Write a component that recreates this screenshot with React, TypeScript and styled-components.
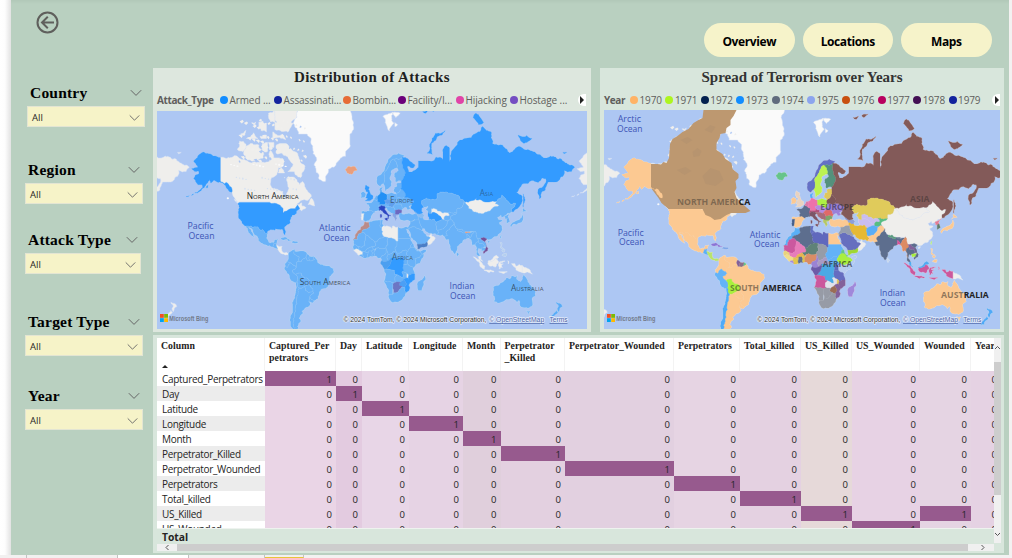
import React from "react";
import styled, { createGlobalStyle } from "styled-components";

const GlobalStyle = createGlobalStyle`
  * { box-sizing: border-box; }
  body { margin: 0; background: #fff; overflow: hidden; font-family: "Open Sans", "Noto Sans", sans-serif; }
`;

const serif = `"Liberation Serif", "DejaVu Serif", serif`;

/* ---------- geography: outlines as "lon lat" pairs ---------- */

const land: Record<string, string[]> = {
  alaska: ["-141 69.6,-146 70.1,-152 70.8,-156.5 71.3,-162 70.2,-166 68.5,-163.5 67,-162 66.2,-167.8 65.7,-165 64.5,-161 64.6,-161 63.6,-164.5 63,-166 61.6,-164 60,-162 58.7,-158 58.7,-157.5 57.5,-161 55.8,-165 54.5,-160 55.4,-156 57.3,-153.5 59.3,-151.5 61,-150 59.5,-147 60.9,-144 60,-139.5 59.7,-136 58.2,-133.5 56,-130.5 54.8,-130 56,-133 58.5,-135.5 59.8,-137.5 59,-141 60.3", "-154.5 57.3,-152.3 58.4,-152.5 57.3", "-168 53.2,-166 54,-166.5 53.4", "-173 52.4,-170 53,-171 52.5"],
  canada: [
    "-141 69.6,-135 69.3,-128 70.2,-124 69.6,-115 68.2,-108 68,-101 68,-95 68.5,-94 71.8,-91 69.5,-86 69.5,-82 69,-82 67,-87 66,-88 64,-93 62,-94.5 59,-92.5 57,-88 56.5,-82.5 55.2,-82 52.8,-80 51.3,-79 52,-79 54.5,-77 56.5,-78 59,-77.5 62.4,-73 62.2,-69.5 61,-67 58.5,-64.5 60.2,-61.5 57,-58 54.5,-56 52.5,-59 50.3,-66 50.2,-70 47.5,-65 48.8,-65 47,-61 45.8,-65 43.6,-67 45,-69 47.4,-71 45,-75 45,-79 43.5,-82.5 42,-82.5 45.2,-84.5 46.5,-88.5 48.2,-95 49,-123 49,-127 51,-130 54.8,-130 56,-133 58.5,-135.5 59.8,-137.5 59,-141 60.3",
    "-59 47.7,-53 46.8,-53.5 49,-56 51.5",
    "-80 73.7,-72 71.5,-67 69,-62 66.5,-65 63.5,-66 62,-72 64.5,-78 64.5,-73 67.5,-79 70,-89 71,-89 73.2,-85 73.7",
    "-117 73,-105 73.3,-101 69.5,-106 68.8,-117 69.5,-119 71.5",
    "-125 72,-123 74.3,-117 73.5,-120 71.5",
    "-87 64,-81 64,-84 66", "-117 75,-106 75,-110 76.3", "-92 75,-80 74.7,-82 75.8,-92 76.5",
    "-90 77,-78 76.5,-75 78.5,-65 81.5,-65 83,-90 81.5", "-102 73.5,-97 74,-97 71.5,-102 71.7",
    "-96 74,-91 74,-91 72.7,-95 72", "-96 80,-90 80.5,-88 78.3,-94 78.5", "-105 78.5,-98 78.3,-98 76.5,-103 76.8",
    "-104 75.5,-98 75.8,-98 75,-103 75", "-122 76,-117 76.8,-118 75.8", "-112 78.3,-108 78.5,-109 77.8",
    "-128 50.8,-123.5 48.4,-125.5 49",
  ],
  greenland: ["-73 78.2,-68 80.5,-60 82,-30 83.5,-15 82,-18 79,-20 76,-20 73.5,-24 71.5,-24 70,-32 68,-40 65.5,-43 60.2,-48.5 61.2,-51.5 64.2,-53.5 67,-51 69,-54.5 70.8,-56 73.5,-60 76,-68 76"],
  svalbard: ["11 79.5,15 79.8,20 80.2,19 78.8,21 78.3,17 76.7,14 78", "20 80.1,27 80,23 79.3", "22 78.4,24.5 78,22 77.6"],
  iceland: ["-24 65.5,-22 66.4,-16 66.5,-13.6 65,-18.5 63.4,-22.5 63.9"],
  usa: ["-123 49,-95 49,-88.5 48.2,-84.5 46.5,-82.5 45.2,-82.5 42,-79 43.5,-75 45,-71 45,-69 47.4,-67 45,-70 43.5,-70 41.8,-74 40.6,-76 37,-75.7 35.3,-78.5 33.7,-81.3 31.5,-80.2 27,-80.5 25.2,-82 26.8,-83 29.8,-85 29.7,-89.5 30.2,-90 29.1,-94 29.6,-97.2 27.8,-97.2 26,-99.3 26.8,-101.5 29.7,-103.2 29,-104.7 29.9,-106.5 31.8,-111 31.4,-114.8 32.5,-117.1 32.5,-120.6 34.5,-124 39.5,-124.3 43,-124.5 48.3"],
  mexico: ["-117.1 32.5,-114.8 32.5,-111 31.4,-106.5 31.8,-104.7 29.9,-103.2 29,-101.5 29.7,-99.3 26.8,-97.2 26,-97.8 22.3,-96 19,-94.5 18.2,-91 18.7,-90.3 21,-87 21.5,-88.2 18.4,-91 17.8,-92 14.6,-95 16,-99 16.6,-104 19,-105.5 20.5,-106 23,-109.5 26,-113 31,-114.7 31.5,-112 28,-109.5 23.2,-112 24.8,-115 28"],
  guatemala: ["-92 14.6,-91 17.8,-88.2 18.4,-88.8 15.9,-87.5 13"],
  central: ["-88.8 15.9,-83.3 15,-83.6 11,-81.5 9,-79 9.5,-77.3 8.6,-78 7.5,-80.5 7.4,-83 8.3,-85.7 10,-87.5 13"],
  cuba: ["-84.8 22,-82 23.1,-77 21.5,-74.2 20.2,-77.5 19.9,-78.5 21.5"],
  hispaniola: ["-74.3 18.4,-73 19.9,-69 19.5,-68.5 18.4,-72 18"],
  colombia: ["-77.3 8.6,-75 10.8,-71.7 12.3,-72.5 9,-70 7,-67.5 6,-67 1.2,-70 0.5,-70 -4.2,-73 -2,-75.3 0,-78.8 1.4,-77.3 4"],
  venezuela: ["-71.7 12.3,-71 10.5,-68 10.7,-62 10.6,-60 8.2,-61 5,-64 3.5,-65.5 0.9,-67 1.2,-67.5 6,-70 7,-72.5 9"],
  guyana: ["-60 8.2,-57.3 6,-58 2,-60 2,-61 5"],
  suriname: ["-57.3 6,-54 5.8,-54.5 2.3,-58 2"],
  frguiana: ["-54 5.8,-51.7 4.2,-54.5 2.3"],
  brazil: ["-51.7 4.2,-50 0,-44.5 -2.5,-40 -2.9,-35.3 -5.2,-34.9 -8,-39 -13,-39 -18,-41 -22,-45 -23.5,-48.5 -26,-49 -28.7,-53.4 -33.7,-57.6 -30.2,-53.8 -27.2,-54.6 -25.6,-54.5 -24,-58 -20,-58 -17,-60 -14,-65.3 -11.5,-65.4 -9.8,-70.5 -11,-73.9 -7.3,-70 -4.2,-70 0.5,-67 1.2,-65.5 0.9,-64 3.5,-61 5,-60 2,-58 2,-54.5 2.3"],
  ecuador: ["-78.8 1.4,-75.3 0,-78.5 -4.5,-80.3 -3.4,-80.9 -1"],
  peru: ["-80.3 -3.4,-78.5 -4.5,-75.3 0,-73 -2,-70 -4.2,-73.9 -7.3,-70.5 -11,-69 -12.5,-69.5 -17.5,-70.4 -18.3,-76.2 -14,-79.5 -7.5,-81.3 -5"],
  bolivia: ["-70.5 -11,-65.4 -9.8,-65.3 -11.5,-60 -14,-58 -17,-58 -20,-62.3 -21.5,-64 -22.5,-67.5 -22.8,-69.5 -17.5,-69 -12.5"],
  paraguay: ["-58 -20,-62.3 -21.5,-58.6 -27.2,-54.6 -25.6,-54.5 -24"],
  argentina: ["-67.5 -22.8,-64 -22.5,-62.3 -21.5,-58.6 -27.2,-54.6 -25.6,-53.8 -27.2,-57.6 -30.2,-58.4 -34,-57 -36.5,-62 -39,-65 -41,-64 -42.8,-67.5 -46,-65.8 -47.8,-69 -51,-68.5 -52.4,-72 -52,-73 -49.5,-71.5 -44,-71 -38,-70 -33,-68.5 -27"],
  uruguay: ["-57.6 -30.2,-53.4 -33.7,-55 -35,-58.4 -34"],
  chile: ["-70.4 -18.3,-69.5 -17.5,-67.5 -22.8,-68.5 -27,-70 -33,-71 -38,-71.5 -44,-73 -49.5,-72 -52,-68.5 -52.4,-68 -55,-73 -53,-75.5 -48,-73.5 -42,-73.5 -37,-71.5 -31,-70.5 -24"],
  morocco: ["-6 35.8,-2.2 35.1,-1.3 32.2,-5 30,-8.7 28.7,-8.7 27.3,-12 26,-13 21.3,-17 21,-14.5 26,-10 29.5,-9.7 31.5,-6.5 34.2"],
  algeria: ["-2.2 35.1,3 36.8,8.6 36.9,8 33,9.5 30,10 26,12 23.5,5 19.2,3.2 19.1,1.2 21,-4.8 25,-8.7 27.3,-8.7 28.7,-5 30,-1.3 32.2"],
  tunisia: ["8.6 36.9,11 37,10.3 34,11.5 33.1,9.5 30,8 33"],
  libya: ["11.5 33.1,15.3 32.3,19 30.3,20 32.5,25 31.6,25 22,25 20,24 19.5,15 23,12 23.5,10 26,9.5 30"],
  egypt: ["25 31.6,31 31.5,34.2 31.3,34.9 29.5,32.5 29.9,35.8 23.9,37 22,25 22"],
  mauritania: ["-17 21,-13 21.3,-12 26,-8.7 27.3,-4.8 25,-5.8 16,-12 15,-16.3 16.5"],
  mali: ["-4.8 25,1.2 21,3.2 19.1,4 16,0.3 14.8,-4 13,-6 10.3,-8 10.5,-11.5 12.5,-12 15,-5.8 16"],
  niger: ["3.2 19.1,5 19.2,12 23.5,15 23,15.5 17,13.5 13.7,9 13,4 13.5,2.5 12,0.3 14.8,4 16"],
  chad: ["15 23,24 19.5,24 15.7,22 13,22.8 11,18.5 8.5,15.5 7.5,15 10,14 12.8,13.5 13.7,15.5 17"],
  senegal: ["-16.3 16.5,-12 15,-11.5 12.5,-16.7 12.4,-17.5 14.7"],
  guinea: ["-16.7 12.4,-11.5 12.5,-8 10.5,-8.3 7.5,-11.3 6.9,-13.3 9"],
  liberia: ["-11.3 6.9,-8.3 7.5,-7.5 4.4"],
  ivory: ["-8 10.5,-6 10.3,-2.8 9.7,-2.9 5,-7.5 4.4,-8.3 7.5"],
  burkina: ["-4 13,0.3 14.8,2.5 12,0.2 11,-2.8 11,-2.8 9.7,-6 10.3"],
  ghana: ["-2.8 11,0.2 11,1.2 6,-2.9 5,-2.8 9.7"],
  benin: ["0.2 11,2.5 12,3.6 11.5,2.7 6.3,1.2 6"],
  nigeria: ["2.7 6.3,3.6 11.5,4 13.5,9 13,13.5 13.7,14 12.8,11.5 7,8.5 4.6,6 4.3,4.5 6.3"],
  cameroon: ["8.5 4.6,11.5 7,14 12.8,15 10,15.5 7.5,14.6 5,16 2,9.8 2.2"],
  car: ["15.5 7.5,18.5 8.5,22.8 11,24 9,27.3 5,22 4.2,18.5 4.5,16 2,14.6 5"],
  sudan: ["25 22,37 22,38.5 18,36.3 14,34 10.5,32 12,28 9.5,24 9,22.8 11,22 13,24 15.7,24 19.5,25 20"],
  ssudan: ["24 9,28 9.5,32 12,34 10.5,33 8,35.8 5,31 3.7,27.3 5"],
  ethiopia: ["36.3 14,38 14.7,41 13.5,42.5 11,48 8,45 5,42 4.2,39 3.5,35.8 5,33 8,34 10.5"],
  eritrea: ["38.5 18,39.8 15.3,43 12.5,42.5 11,41 13.5,38 14.7,36.3 14"],
  somalia: ["42.5 11,51.2 11.8,48 4.5,41.5 -1.7,41 3,42 4.2,45 5,48 8"],
  kenya: ["35.8 5,39 3.5,42 4.2,41 3,41.5 -1.7,39.2 -4.7,34 -1,34 4"],
  uganda: ["31 3.7,35.8 5,34 4,34 -1,29.8 -1.3"],
  tanzania: ["34 -1,39.2 -4.7,39.5 -7,40.5 -10.5,35 -11.5,33 -9.5,30.5 -8.3,29.4 -4.5,29.8 -1.3"],
  drc: ["18.5 4.5,22 4.2,27.3 5,31 3.7,29.8 -1.3,29.4 -4.5,30.5 -8.3,28.5 -8.5,29.8 -13.4,26 -12,24 -11,22 -11.1,21.8 -7.3,16.5 -6,12.3 -6,16 -3.5,17.8 -0.5"],
  gabon: ["9.8 2.2,16 2,18.5 4.5,17.8 -0.5,16 -3.5,12.3 -6,8.8 -1"],
  angola: ["12.3 -6,16.5 -6,21.8 -7.3,22 -11.1,24 -11,22 -13,22 -16.2,23.3 -17.6,18 -17.4,11.8 -17.2,13.7 -11"],
  zambia: ["24 -11,26 -12,29.8 -13.4,28.5 -8.5,30.5 -8.3,33 -9.5,33 -14,30.3 -15.6,27 -17.9,23.3 -17.6,22 -16.2,22 -13"],
  malawi: ["33 -9.5,35 -11.5,35.5 -16.5,33 -14"],
  mozambique: ["35 -11.5,40.5 -10.5,40.5 -15.5,35 -20,35.5 -24,32.8 -26.8,31.3 -22.4,32.8 -19,30.3 -15.6,33 -14,35.5 -16.5"],
  zimbabwe: ["27 -17.9,30.3 -15.6,32.8 -19,31.3 -22.4,29 -22,26 -19.5"],
  botswana: ["23.3 -17.6,27 -17.9,26 -19.5,29 -22,25.5 -25.6,20.7 -26.8,20 -22,21 -18.3"],
  namibia: ["11.8 -17.2,18 -17.4,23.3 -17.6,21 -18.3,20 -22,20 -28.4,16.5 -28.6,14.5 -22.5"],
  safrica: ["16.5 -28.6,20 -28.4,20.7 -26.8,25.5 -25.6,29 -22,31.3 -22.4,32.8 -26.8,31 -30,28 -33,20 -34.8,18.3 -34"],
  madagascar: ["49.3 -12,50.3 -16,47.2 -25,44 -25,44.2 -17"],
  norway: ["5 61.8,5.5 59,8 58,11 59.2,12.5 61,12 63.5,14 65,18 68.5,21 69.1,25.5 69,29 69.8,31 70.3,25.5 71,18 69.7,13 66.5,9.5 63.5"],
  sweden: ["11 59.2,13 55.4,16.5 57,19 60,17.3 62,22 65.8,24 66,23.5 68,21 69.1,18 68.5,14 65,12 63.5,12.5 61"],
  finland: ["21 69.1,25.5 69,29 69.8,29.5 66,31.5 63,28 60.5,22.8 60,21.3 62.5,25.3 65,24 66,23.5 68"],
  denmark: ["8.2 57,10.6 57.6,10 54.8,8.6 54.8"],
  uk: ["-5.7 50,1.4 51.2,1.7 52.8,-1.5 55,-2 57.6,-5 58.6,-6 56.5,-3 54.5,-4.5 53,-5.2 51.8,-3 51.3"],
  ireland: ["-6 52.2,-10 51.6,-9.8 54.2,-7.5 55.3,-5.5 54.5"],
  france: ["-4.7 48.4,-1.5 48.7,2.5 51,6 49.5,8.2 49,7.6 47.6,7 46,7.5 43.8,3 43,3.1 42.4,-1.8 43.4,-1.2 46"],
  spain: ["-9.2 43.2,-1.8 43.4,3.1 42.4,0 40,-0.3 38.5,-2 36.8,-5.5 36,-7.4 37.2,-6.5 41.9,-8.8 41.9"],
  portugal: ["-8.8 41.9,-6.5 41.9,-7.4 37.2,-9 37,-9.4 39"],
  benelux: ["2.5 51,4.5 53,7 53.4,6 49.5"],
  germany: ["7 53.4,8.6 54.8,10 54.8,14.2 53.9,15 51,12.2 50.2,13.5 48.6,12.5 47.6,7.6 47.6,8.2 49,6 49.5"],
  austria: ["7 46,7.6 47.6,12.5 47.6,13.5 48.6,16.8 48.3,16.5 46.5,12.5 46.7"],
  italy: ["7 46,12.5 46.7,13.5 45.7,12.3 45,13.7 43.5,18.3 40.2,16.8 40.4,16 38,15.5 40,12.3 41.8,10.3 43.7,8.5 44.3,7.5 43.8", "12.5 38,15.5 38.2,15 36.7", "8.3 41,9.6 41,9.5 39.1,8.5 39"],
  poland: ["14.2 53.9,18.5 54.7,23.5 54,24 50.8,22.5 49.2,15 51"],
  czech: ["12.2 50.2,15 51,22.5 49.2,22.5 48,20.3 46.2,16.5 46.5,16.8 48.3,13.5 48.6"],
  yugoslavia: ["12.5 46.7,16.5 46.5,20.3 46.2,22.5 44,22.5 41.5,20 42,15 44,13.5 45.7"],
  greece: ["20 42,22.5 41.5,26 41.5,23 40.3,24 38,22.5 36.5,20 39.8"],
  romania: ["22.5 48,27 48,29.7 45.2,28.6 43.7,22.5 44,20.3 46.2"],
  bulgaria: ["22.5 44,28.6 43.7,28 42,26 41.5,22.5 41.5"],
  ukraine: ["24 50.8,24 51.6,31 52,34 52,40 49.5,38 47.2,35 46.3,36.5 45.3,33.5 44.5,32.5 46,29.7 45.2,27 48,22.5 48,22.5 49.2"],
  belarus: ["24 51.6,23.5 54,27.5 56.5,31 55,32 53,31 52"],
  baltics: ["21 55.3,21.5 57.5,24 58,23.5 59.2,28 59.4,27.5 56.5,23.5 54"],
  turkey: ["26 39.5,26 41.5,28 42,31 41.2,36 41.8,41.5 41.5,44 39.5,44.5 37.2,36.2 36.2,30.5 36.5,27.5 37"],
  caucasus: ["40 43.4,46.5 41.8,49.8 40.3,48.5 38.5,44 39.5,41.5 41.5"],
  russia: [
    "28 59.4,28 60.5,31.5 63,29.5 66,29 69.8,33 69.4,41 67,40 66.2,34 66.7,35 64.3,38 64.3,40 65,44 66.2,44 68.5,53 68.5,59 68.8,60.5 69.8,67 69,67 71,70 73.2,73 72.5,73 68,76 72,80.5 73.5,87 75,98 76.2,104 77.6,112 76.5,113 73.8,123 73.2,129 71,131 71.3,140 72.7,150 71.6,160 69.8,170 70,178 69,184 67.3,190 66.2,187 64.5,180 65,179 62.5,170 60,165 60,162.5 56,157 51.2,156 56.5,163 61.5,160 61.8,156 59.7,143 59.3,135.5 54.7,141 52.5,140 48,133 43,131 43,131 45,135 48.4,131 47.8,127.5 49.8,122 53.4,117 49.7,110 49.3,98 50.5,98 52,87.5 49.2,83 51,76.5 54,70.5 55,61.5 54,61 51,51.5 51.5,47 50,47 48,49 46,47 45,48 42,46.5 41.8,40 43.4,37 45.2,38 47.2,40 49.5,34 52,31 52,32 53,31 55,27.5 56.5",
    "52 71,57 70.6,56 73,62 75.5,69 76.8,60 76.2,54.5 73.5", "95 79.3,98 80,100 79.8,103 79,105 78.4,100 78",
    "137 75.8,145 75.7,150 75,142 73.8,139 74.8", "179 71.2,182.5 71.2,180 70.8", "48 80.3,53 80.5,51 80", "56 80.6,62 80.8,58 80.3",
    "142 54,143.3 52,143 49,142 46,142 50",
  ],
  kazakhstan: ["49 46,47 48,47 50,51.5 51.5,61 51,61.5 54,70.5 55,76.5 54,83 51,87.5 49.2,85.5 47,82.5 45.2,80 45,80 42.3,71 42.5,66.5 42,62 43.5,58.5 45.5,56 45,56 41.5,53 42.3,51 44.5,53 46.7"],
  uzbekistan: ["56 41.5,56 45,58.5 45.5,62 43.5,66.5 42,71 42.5,73 40.5,69 40,68 37.2,66.5 37.4,62 41.2,60 42,58.5 42.6"],
  turkmenistan: ["53 42.3,56 41.5,58.5 42.6,60 42,62 41.2,66.5 37.4,61.2 35.5,59 37.5,54 37.4"],
  kyrgyzstan: ["71 42.5,80 42.3,74 39.5,74.8 37.3,68 37.2,69 40,73 40.5"],
  iran: ["44.5 37.2,44 39.5,48.5 38.5,49 37.5,54 37.4,59 37.5,61.2 35.5,61 31,61 29.5,63 27.2,61.5 25.1,57.3 26,54 26.5,50 30,48 30.3,45.8 33.5"],
  afghanistan: ["61.2 35.5,66.5 37.4,68 37.2,74.8 37.3,71 36,69.3 32,66.3 30,61 29.5,61 31"],
  pakistan: ["61.5 25.1,63 27.2,61 29.5,66.3 30,69.3 32,71 36,74.8 37.3,76 36.5,77.5 35,74.5 32,70 27.8,71 24.5,68 23.8,66.5 25.3"],
  india: ["68 23.8,71 24.5,70 27.8,74.5 32,77.5 35,79 31,81 30,80.5 28.8,88 26.8,92 27,97 28.3,95 26.5,93.3 23.8,92 22,91 24.5,89 25.5,88.8 21.8,86.8 21.3,82 16.6,80.2 15,80 11.5,77.6 8.1,76 11,73 17,72.7 21.2,70 21,69 22.3"],
  nepal: ["81 30,88 28,88 26.8,80.5 28.8"],
  bhutan: ["88 28,92 28,92 27,88 26.8"],
  bangladesh: ["88.8 21.8,89 25.5,91 24.5,92 22"],
  srilanka: ["80 9.6,81.8 7.5,80.5 6,79.8 7.8"],
  saudi: ["34.9 29.5,38 31.8,42 31,46.8 29,48.5 28.5,50.2 26.2,51.5 24.3,55 22.7,52 19,47 17,43 17,39 21,37 25"],
  iraq: ["36.2 36.2,42 37.2,44.5 37.2,45.8 33.5,48 30.3,46.8 29,42 31,38 31.8,34.9 29.5,34.2 31.3,35.5 33"],
  yemen: ["43 17,47 17,52 19,52.3 16,45 13,43.4 12.7"],
  oman: ["52 19,55 22.7,51.5 24.3,56.3 26,57 24,59.8 22.5,57 18.8,52.3 16"],
  china: ["74 39.5,80 42.3,80 45,82.5 45.2,85.5 47,87.5 49.2,91 45.2,96 42.7,105 41.7,111 43.5,116 46.5,119.5 47,116 48,117 49.7,122 53.4,127.5 49.8,131 47.8,135 48.4,131 45,131 43,124.3 40,121.5 39,121 40.8,117.8 39,119 37.2,122.5 37,119.5 35,122 31,121.5 28,118 24.3,113 22.2,108 21.6,105 23,102 22.3,99 22,98 25,97 28.3,92 28,88 28,81 30,79 31,77.5 35,76 36.5,74.8 37.3", "108.7 19.5,111 20,109.5 18.2"],
  mongolia: ["87.5 49.2,98 52,98 50.5,110 49.3,117 49.7,116 48,119.5 47,116 46.5,111 43.5,105 41.7,96 42.7,91 45.2"],
  nkorea: ["124.3 40,130.6 42.3,127.5 39.5,128.3 38.5,125 38"],
  skorea: ["126.5 37.8,128.3 38.5,129.5 36,126.5 34.4"],
  japan: ["130.5 31.5,132 33.5,136 33.6,140.5 35.3,142 39.5,141 41.3,139.5 38.5,137 37,132.5 35.4,129.8 33", "140 42,145 43.3,141.8 45.4"],
  taiwan: ["120.2 23,121.5 25.2,121 22"],
  myanmar: ["92 22,93.3 23.8,95 26.5,97 28.3,98 25,99 22,100.2 20.3,97.8 18.5,98.7 14,98.5 10.2,97.5 16.5,94.5 16,94 19"],
  thailand: ["97.8 18.5,100.2 20.3,101 17.7,104 18.3,105.5 14.5,102.5 13.5,102 12.3,100.2 13.4,99.3 10,101.5 6.5,100.3 6.4,98.3 8,98.7 14"],
  laos: ["99 22,102 22.3,104.5 20,107.5 15,105.5 14.5,104 18.3,101 17.7,100.2 20.3"],
  cambodia: ["102.5 13.5,107.5 14.3,106 11.2,103 11"],
  vietnam: ["102 22.3,105 23,108 21.6,105.8 19,109 13,108.5 11.2,105 8.7,104.7 10.3,106 11.2,107.5 14.3,107.5 15,104.5 20"],
  malaya: ["100.3 6.4,102 6.2,104 1.4,101 3"],
  indonesia: [
    "95.3 5.6,98 4.2,103.5 -0.5,106 -3,105.5 -5.8,102 -4,98.7 1.7", "105.2 -6.7,108.5 -6.7,114.4 -7.7,114.4 -8.6,106.5 -7.4",
    "119 -3,120 1,125 1.5,120.5 0.3,121 -1,123.3 -1,121.5 -2,122.5 -4.5,121 -4,120.3 -5.5,119.5 -5.5",
    "131 -0.8,134 -0.8,135 -3.3,138 -1.6,141 -2.6,141 -9,138 -8,134 -4", "119 -8.4,125 -8.4,127 -8.4,124 -10", "127.5 2,128.5 1,128 -1",
  ],
  kalimantan: ["109 1.5,112 1.2,116 4.2,119 1,116 -4,110.2 -2.8"],
  sabah: ["109.7 2,113 3.3,116.8 7,119 5.2,116 4.2,112 1.2,109 1.5"],
  papua: ["141 -2.6,147.5 -6,150.5 -10.5,146 -8.5,141 -9"],
  philippines: ["120.5 18.5,122 18.3,121.5 15,124 13,120.7 14", "122 7,124 8.5,126.3 8.5,125.5 6", "122 11.5,125 12,124 10"],
  australia: ["114 -22,117 -20.6,122 -18,126 -14,129 -15,131 -12.2,136.5 -12,135.6 -15,139.5 -17.5,141 -13.5,142.5 -10.8,145.3 -15,148 -20,153 -25.5,153.5 -29,150 -37.5,146.3 -39,143.5 -38.7,140 -38,138 -33,136 -34.8,131.5 -31.5,126 -32.3,123.5 -34,118 -35,115 -34.2,115.7 -32,113.7 -26", "144.7 -40.8,148.3 -41,147 -43.6"],
  newzealand: ["172.8 -34.5,178.4 -37.8,175 -41.5,173.8 -39.3,175 -37.5", "172.7 -40.6,174.2 -41.8,171 -44,170.5 -46,167 -46.2,168.5 -44"],
};

type Pt = [number, number];

const project = ([lon, lat]: Pt): Pt => [
  371.3 + 1.0706 * lon,
  262.8 - 61.36 * Math.log(Math.tan(Math.PI / 4 + (lat * Math.PI) / 360)),
];

const noise = (a: Pt, b: Pt) => {
  const v = Math.sin(a[0] * 12.99 + a[1] * 78.23 + b[0] * 37.7 + b[1] * 4.58) * 43758.5453;
  return v - Math.floor(v) - 0.5;
};

/* Breaks an edge into a ragged coast; neighbours that share it get the same line. */
const ragged = (a: Pt, b: Pt, depth: number): Pt[] => {
  const dx = b[0] - a[0];
  const dy = b[1] - a[1];
  if (depth === 0 || Math.abs(dx) < 0.01 || Math.abs(dy) < 0.01 || Math.hypot(dx, dy) < 2) return [a];
  const swap = a[0] > b[0];
  const n = (swap ? -noise(b, a) : noise(a, b)) * 0.38;
  const m: Pt = [a[0] + dx / 2 - dy * n, a[1] + dy / 2 + dx * n];
  return [...ragged(a, m, depth - 1), ...ragged(m, b, depth - 1)];
};

const toPath = (ring: string) => {
  const pts = ring.split(",").map((p) => project(p.split(" ").map(Number) as Pt));
  return (
    "M" +
    pts
      .flatMap((p, i) => ragged(p, pts[(i + 1) % pts.length], 3))
      .map((p) => `${p[0].toFixed(1)} ${p[1].toFixed(1)}`)
      .join("L") +
    "Z"
  );
};

const paths: Record<string, string> = Object.fromEntries(
  Object.entries(land).map(([k, rings]) => [k, rings.map(toPath).join("")])
);

const LIGHT = "#69b2f8";
const DARK = "#339bff";
const unshaded = ["canada", "greenland", "svalbard", "central", "libya", "oman", "uzbekistan", "mongolia", "portugal", "guinea", "malawi", "indonesia", "kalimantan", "papua", "malaya", "laos", "sabah"];
const attackFill: Record<string, string> = {
  ...Object.fromEntries(Object.keys(land).filter((k) => !unshaded.includes(k)).map((k) => [k, LIGHT])),
  alaska: DARK, usa: DARK, russia: DARK, drc: DARK, mozambique: DARK, zimbabwe: "#4b9ff5", turkmenistan: DARK, gabon: "#4c9ff0",
  uk: DARK, germany: "#2390f5", italy: "#2b47c4", bulgaria: "#6c68c0", greece: "#86a5e6", iceland: "#e99e7c", morocco: "#ba8b89",
  yemen: "#4b7ec6", vietnam: "#74509a", laos: LIGHT, bhutan: "#e9a183", botswana: "#6c76c4", philippines: "#b5d0f1",
  czech: "#5f9fee", caucasus: "#8abcf2", newzealand: "#58abf8",
};

const P = "#fcc992";
const SL = "#5d6e8e";
const spreadFill: Record<string, string> = {
  alaska: P, usa: P, mexico: P, guatemala: "#5cb0f7", central: "#b9e36c", cuba: "#8a74d6", hispaniola: "#7fa8ea",
  colombia: P, venezuela: P, guyana: "#83619a", suriname: "#8d6e88", frguiana: "#66c389", brazil: P, ecuador: P, peru: "#63b3f8", bolivia: "#a9f03d",
  paraguay: P, argentina: P, uruguay: P, chile: "#4fabf8", iceland: "#66c48a",
  morocco: "#5ab0f8", algeria: SL, tunisia: "#6470c2", libya: "#6068bd", egypt: P, mauritania: "#cb589f", mali: "#e77cba", niger: "#5f8278", chad: "#969ca8",
  senegal: "#e8d27c", guinea: "#f1dc8a", liberia: "#a78bdc", ivory: "#e2c64f", burkina: "#e8b450", ghana: SL, benin: "#e0c04a", nigeria: "#d98d66", cameroon: "#9a83d4", car: "#a99bc4",
  sudan: "#63b2f8", ssudan: "#63b2f8", ethiopia: "#a9ef3f", eritrea: "#66c48a", kenya: "#b9cdf0", somalia: "#b4cbf2", uganda: "#6068bd",
  tanzania: "#666dc0", drc: "#4ba9e5", gabon: "#6c5aa8", angola: "#cb589d", zambia: "#e2e2ea", malawi: "#e3c45a", mozambique: "#83619a", zimbabwe: "#9b6d55",
  botswana: "#979ba6", namibia: "#979ba6", safrica: "#979ba6", madagascar: "#a088da",
  norway: "#6470c6", sweden: "#bdf252", finland: "#54917c", denmark: "#58aef8", uk: "#e9d2bf", ireland: P, france: SL, spain: P, portugal: "#46608c",
  benelux: "#d97aa8", germany: "#ee72ab", austria: "#b04f79", italy: "#7b5567", poland: "#aef045", czech: "#b48ae0", yugoslavia: "#a86b7a", greece: "#b5c765", romania: "#e06969", bulgaria: "#7ea56c",
  ukraine: "#9b80d9", belarus: "#7c5558", baltics: "#dfc75c", turkey: P, caucasus: "#8ea0d8", russia: "#835a59",
  kazakhstan: "#e0cb5b", uzbekistan: "#c9bdf0", turkmenistan: "#c9bdf0", kyrgyzstan: "#58bd83", iran: "#e6b933", afghanistan: "#5aadf7", pakistan: P, india: SL, nepal: "#5c9c80",
  bhutan: "#5d6e8e", bangladesh: "#d94f97", srilanka: "#c3d5ef", saudi: "#666fbf", iraq: "#969eae", yemen: "#9fd733", nkorea: "#e37b96", skorea: "#5f7d6f",
  japan: P, taiwan: "#a9ef6f", myanmar: "#dd8b62", thailand: SL, laos: "#83619a", cambodia: "#a9ef3f", vietnam: SL, malaya: "#50aaf2", indonesia: "#cb589d",
  kalimantan: "#cb589d", sabah: "#50aaf2", philippines: P, australia: P, newzealand: "#4fa9f7",
};

/* ---------- page frame ---------- */

const Page = styled.div`
  width: 1012px;
  height: 558px;
  display: flex;
  flex-direction: column;
  overflow: hidden;
`;
const Workspace = styled.div`
  display: flex;
  height: 555px;
  background: #f3f1f1;
`;
const PageEdge = styled.div`
  width: 11px;
  background: linear-gradient(90deg, #fff 0, #fdfdfd 45%, #e2e2e2 100%);
`;
const Report = styled.main`
  width: 998px;
  display: flex;
  background: linear-gradient(#b1c8b8 0, #b9d0c0 4px);
`;
const Sidebar = styled.aside`
  width: 142px;
  display: flex;
  flex-direction: column;
`;
const BackButton = styled.button`
  width: 24px;
  height: 24px;
  margin: 11px 0 45px 25px;
  padding: 0;
  border: 0;
  background: none;
  display: block;
`;
const Main = styled.div`
  width: 851px;
  display: flex;
  flex-direction: column;
`;
const Nav = styled.nav`
  height: 68px;
  padding: 23px 12.5px 0 0;
  display: flex;
  justify-content: flex-end;
  gap: 8px;
`;
const NavButton = styled.button`
  width: 90.5px;
  height: 34px;
  border: 0;
  padding: 2px 0 0;
  border-radius: 17px;
  background: #f6f3ca;
  color: #000;
  font: 700 12px "Open Sans", sans-serif;
  letter-spacing: -0.4px;
`;

/* ---------- slicers ---------- */

const SlicerBlock = styled.section<{ $indent: number; $width: number; $gap: number }>`
  margin: 0 0 ${(p) => p.$gap}px ${(p) => p.$indent}px;
  width: ${(p) => p.$width}px;
`;
const SlicerTitle = styled.h3`
  margin: 0;
  height: 26px;
  padding: 0 3px;
  display: flex;
  align-items: center;
  justify-content: space-between;
  color: #000;
  font: 700 15.5px ${serif};
  letter-spacing: 0.2px;
`;
const SlicerSelect = styled.div`
  height: 21px;
  padding: 2px 4px 0 4px;
  display: flex;
  align-items: center;
  justify-content: space-between;
  border: 1px solid #e3e5d3;
  background: #f6f3c8;
  color: #252423;
  font-size: 9.5px;
`;

const Chevron = ({ w = 12 }: { w?: number }) => (
  <svg width={w} height="8" viewBox="0 0 12 8" fill="none" stroke="#666" strokeWidth="1">
    <path d="M0.8 1.2L6 6.4L11.2 1.2" />
  </svg>
);

const slicers = [
  { title: "Country", indent: 16, width: 118, gap: 30 },
  { title: "Region", indent: 14, width: 118, gap: 23 },
  { title: "Attack Type", indent: 14, width: 116, gap: 35 },
  { title: "Target Type", indent: 14, width: 118, gap: 27 },
  { title: "Year", indent: 14, width: 118, gap: 0 },
];

/* ---------- map panels ---------- */

const MapRow = styled.div`
  display: flex;
  gap: 9px;
  height: 264px;
`;
const Panel = styled.section<{ $width: number; $tint: string }>`
  width: ${(p) => p.$width}px;
  padding: 0 4px;
  background: ${(p) => p.$tint};
`;
const PanelTitle = styled.h2<{ $color: string; $track: number }>`
  margin: 0;
  height: 20px;
  text-align: center;
  color: ${(p) => p.$color};
  font: 700 15px/19px ${serif};
  letter-spacing: ${(p) => p.$track}px;
  white-space: nowrap;
`;
const LegendRow = styled.div<{ $h: number }>`
  height: ${(p) => p.$h}px;
  padding-top: 1px;
  display: flex;
  align-items: center;
  color: #605e5c;
  font-size: 10px;
  letter-spacing: -0.1px;
`;
const LegendTitle = styled.span<{ $width: number }>`
  width: ${(p) => p.$width}px;
  font-weight: 700;
  letter-spacing: -0.4px;
`;
const LegendItem = styled.span<{ $width: number; $dot: string }>`
  width: ${(p) => p.$width}px;
  display: flex;
  align-items: center;
  gap: 1.5px;
  white-space: nowrap;
  &::before {
    content: "";
    width: 8px;
    height: 8px;
    flex: none;
    border-radius: 50%;
    background: ${(p) => p.$dot};
  }
`;
const LegendNext = styled.span<{ $inset: number }>`
  margin-left: auto;
  margin-right: ${(p) => p.$inset}px;
  width: 8px;
  height: 12px;
  display: flex;
  align-items: center;
  justify-content: flex-end;
  border-radius: 6px 0 0 6px;
  background: #fff;
  &::after {
    content: "";
    border-left: 4px solid #222;
    border-top: 4px solid transparent;
    border-bottom: 4px solid transparent;
    margin-right: 1.5px;
  }
`;
const MapSvg = styled.svg`
  display: block;
  background: #adc7f3;
`;

type Label = { t: string; x: number; y: number; w: number; kind: "water" | "caps" | "bold"; o?: number };

const MapLabels = ({ items }: { items: Label[] }) => (
  <g>
    {items.map((l, i) => (
      <text
        key={i}
        x={l.x}
        y={l.y + 3}
        textLength={l.w}
        lengthAdjust="spacingAndGlyphs"
        fontFamily="Open Sans, sans-serif"
        fontSize={l.kind === "water" ? 9 : l.kind === "caps" ? 8.4 : 9}
        fontWeight={l.kind === "bold" ? 700 : 400}
        fill={l.kind === "water" ? "#3d55b6" : "#222"}
        fillOpacity={l.o ?? 1}
        style={l.kind === "caps" ? { fontVariant: "small-caps" } : undefined}
      >
        {l.t}
      </text>
    ))}
  </g>
);

const Credits = ({ x, right }: { x: number; right: number }) => (
  <g fontFamily="Liberation Sans, sans-serif" fontSize="7.6">
    <rect x={x} y="0" width="3.8" height="3.8" fill="#f25022" />
    <rect x={x + 4.2} y="0" width="3.8" height="3.8" fill="#7fba00" />
    <rect x={x} y="4.2" width="3.8" height="3.8" fill="#00a4ef" />
    <rect x={x + 4.2} y="4.2" width="3.8" height="3.8" fill="#ffb900" />
    <text x={x + 9.3} y="6.8" fontWeight="700" fontSize="7" fill="#737b8c" textLength="39" lengthAdjust="spacingAndGlyphs">Microsoft Bing</text>
    <g stroke="#e6edfa" strokeWidth="1.6" paintOrder="stroke" strokeLinejoin="round">
      <text x={right - 224} y="8.2" fill="#333" textLength="143" lengthAdjust="spacingAndGlyphs">© 2024 TomTom, © 2024 Microsoft Corporation,</text>
      <text x={right - 78.3} y="8.2" fill="#4a64a8" textLength="55" lengthAdjust="spacingAndGlyphs">© OpenStreetMap</text>
      <text x={right - 18} y="8.2" fill="#4a64a8" textLength="18" lengthAdjust="spacingAndGlyphs">Terms</text>
    </g>
    <path d={`M${right - 78.3} 9.5h55M${right - 18} 9.5h18`} stroke="#4a64a8" strokeWidth="0.7" />
  </g>
);

/* lakes on the mainland, then islets of the Arctic archipelago */
const lakes = Array.from({ length: 34 }, (_, i) => project([-134 + ((i * 37) % 66), 51.5 + ((i * 53) % 160) / 10]));
const islets = Array.from({ length: 70 }, (_, i) => project([-124 + ((i * 41) % 62), 68.5 + ((i * 29) % 115) / 10]));

const BaseLand = () => (
  <g>
    {[-360, 0, 360].map((shift) => (
      <g key={shift} transform={`translate(${shift * 1.0706} 0)`}>
        {Object.entries(paths).map(([k, d]) => (
          <path key={k} d={d} fill={k === "greenland" || k === "svalbard" ? "#fafafa" : "#efeeec"} stroke={shift === 0 && k !== "greenland" ? "#e6eaf0" : "#d5e1f5"} strokeWidth="0.5" />
        ))}
      </g>
    ))}
    {lakes.map((p, i) => (
      <ellipse key={i} cx={p[0]} cy={p[1]} rx={i % 3 ? 0.7 : 1.1} ry={i % 4 ? 0.6 : 1.1} fill={i % 3 ? "#d3e0f2" : "#fafafa"} />
    ))}
    {islets.map((p, i) => (
      <path key={i} d={`M${p[0].toFixed(1)} ${p[1].toFixed(1)}l${1 + (i % 3)} -${0.6 + (i % 2)}l1.2 1.6l-${1 + (i % 2)} ${1 + (i % 3) * 0.5}z`} fill={i % 5 ? "#f0efed" : "#adc7f3"} />
    ))}
  </g>
);

const attackLabels: Label[] = [
  { t: "Pacific", x: 187.5, y: 226, w: 26, kind: "water" },
  { t: "Ocean", x: 188.5, y: 236.3, w: 26, kind: "water" },
  { t: "Atlantic", x: 319, y: 228, w: 31.5, kind: "water" },
  { t: "Ocean", x: 323.5, y: 238.3, w: 26, kind: "water" },
  { t: "Indian", x: 449.5, y: 286, w: 25, kind: "water" },
  { t: "Ocean", x: 450, y: 296.3, w: 25.5, kind: "water" },
  { t: "North America", x: 246.7, y: 195.5, w: 52, kind: "caps" },
  { t: "South America", x: 299.7, y: 281.7, w: 50.5, kind: "caps", o: 0.75 },
  { t: "Africa", x: 392, y: 257.3, w: 21, kind: "caps", o: 0.6 },
  { t: "Europe", x: 390, y: 200.3, w: 23.5, kind: "caps", o: 0.6 },
  { t: "Asia", x: 479.7, y: 192.5, w: 13.6, kind: "caps", o: 0.45 },
  { t: "Australia", x: 511, y: 288, w: 32.5, kind: "caps", o: 0.7 },
];

const spreadLabels: Label[] = [
  { t: "Arctic", x: 617.7, y: 118.7, w: 23.3, kind: "water" },
  { t: "Ocean", x: 617, y: 128.5, w: 25.5, kind: "water" },
  { t: "Pacific", x: 617.7, y: 232.5, w: 26, kind: "water" },
  { t: "Ocean", x: 619, y: 242, w: 25.5, kind: "water" },
  { t: "Atlantic", x: 749.7, y: 234.7, w: 30.7, kind: "water" },
  { t: "Ocean", x: 754, y: 244.3, w: 25.5, kind: "water" },
  { t: "Indian", x: 879.7, y: 293, w: 25.5, kind: "water" },
  { t: "Ocean", x: 880, y: 302.5, w: 25.7, kind: "water" },
  { t: "NORTH AMERI", x: 677, y: 201.8, w: 61, kind: "bold", o: 0.42 },
  { t: "CA", x: 738.6, y: 201.8, w: 11.8, kind: "bold" },
  { t: "SOUTH", x: 730, y: 288, w: 29, kind: "bold", o: 0.5 },
  { t: "AMERICA", x: 762.5, y: 288, w: 39.2, kind: "bold" },
  { t: "AFRICA", x: 822.7, y: 263.7, w: 29.5, kind: "bold", o: 0.65 },
  { t: "EUROPE", x: 820.3, y: 206.5, w: 33.5, kind: "bold", o: 0.55 },
  { t: "ASIA", x: 910, y: 199, w: 19.5, kind: "bold", o: 0.4 },
  { t: "AUST", x: 941, y: 294.7, w: 22.5, kind: "bold", o: 0.5 },
  { t: "RALIA", x: 963.7, y: 294.7, w: 25, kind: "bold" },
];

const AttackMap = () => (
  <MapSvg width="430" height="218" viewBox="157 111 430 218">
    <BaseLand />
    {Object.entries(attackFill).map(([k, c]) => (
      <path key={k} d={paths[k]} fill={c} stroke={c === LIGHT ? "#84bff8" : c} strokeWidth="0.4" />
    ))}
    <MapLabels items={attackLabels} />
    <g transform="translate(0 314)">
      <Credits x={160} right={567.5} />
    </g>
  </MapSvg>
);

const canadaTerritory =
  "M220.5 158L227 158L230.5 158.5L233 156L236 157L238.5 152L239.5 138L242 133L247 130L252 126L258 123L263 117L268 114L272 112L273 104L306 104L303 110L300 114L300 119L296 122L295 127L290 128L289 132L286 137L286 144L292 148L295 153L301 157L302 163L308 168L308 172L305 175L306 182L304 186L306 192L311 197L320 205L315 207L312 207L301 207L296 209L290 213L284 214L280 211L275 209L272 203L238 203L231 197L228 192L222 184L220.5 181Z";

const SpreadMap = () => (
  <MapSvg width="396" height="219" viewBox="604 110 396 219">
    <g transform="translate(430.5 6)">
      <BaseLand />
      {Object.entries(spreadFill).map(([k, c]) => (
        <path key={k} d={paths[k]} fill={c} stroke={c} strokeWidth="0.3" />
      ))}
      <path d={canadaTerritory} fill="#bd9870" />
      <path d="M262 146l5-4 4 3-2 5-6 1zM246 164l9-3 6 4-7 4zM272 170l8-8 9 3 4 9-8 6-10-2zM250 134l7-3 5 3-6 4zM274 124l6-5 5 2-4 6z" fill="#b7946f" />
      <path d={paths.alaska} fill={P} />
    </g>
    <MapLabels items={spreadLabels} />
    <g transform="translate(0 314)">
      <Credits x={607} right={981.3} />
    </g>
  </MapSvg>
);

const attackLegend: [string, string, number][] = [
  ["Armed ...", "#118dff", 54],
  ["Assassinati...", "#12239e", 69],
  ["Bombin...", "#e66c37", 55],
  ["Facility/I...", "#6b007b", 58],
  ["Hijacking", "#e044a7", 54],
  ["Hostage ...", "#744ec2", 58],
];
const yearColors = ["#ffb366", "#adf51f", "#03204f", "#118dff", "#5f6b7d", "#8ca5ee", "#c8500f", "#b8005f", "#430f54", "#12239e"];

/* ---------- matrix ---------- */

const MatrixPanel = styled.section`
  width: 851px;
  height: 218px;
  margin-top: 3px;
  padding: 3px 4px 0 4px;
  background: #d8e6dc;
  display: flex;
  flex-direction: column;
`;
const MatrixBody = styled.div`
  display: flex;
  height: 205px;
`;
const MatrixMain = styled.div`
  width: 837px;
`;
const columnTracks = "108px 71px 26px 47px 54px 37.5px 64.5px 109px 66px 61px 51px 68px 51px 30px";
const MatrixView = styled.div`
  height: 191px;
  overflow: hidden;
  background: #fff;
  border-bottom: 1px solid #eef3ef;
`;
const HeaderRow = styled.div`
  display: grid;
  grid-template-columns: ${columnTracks};
  height: 33px;
  width: 844px;
`;
const HeaderCell = styled.div`
  padding: 2px 0 0 4px;
  border-right: 1px solid #f3f3f3;
  color: #252423;
  font: 700 9.8px/12px ${serif};
  letter-spacing: 0.05px;
  white-space: pre;
`;
const SortMark = styled.span`
  display: block;
  width: 0;
  margin: 13px 0 0 1px;
  border-left: 3px solid transparent;
  border-right: 3px solid transparent;
  border-bottom: 3px solid #222;
`;
const BodyRow = styled.div`
  display: grid;
  grid-template-columns: ${columnTracks};
  height: 15px;
  width: 844px;
`;
const RowLabel = styled.div<{ $band: boolean }>`
  padding-left: 5px;
  background: ${(p) => (p.$band ? "#ececec" : "#fff")};
  color: #252423;
  font-size: 10px;
  letter-spacing: -0.3px;
  line-height: 17px;
  white-space: nowrap;
`;
const ValueCell = styled.div<{ $fill: string; $hit: boolean }>`
  padding-right: 4px;
  border-bottom: 1px solid ${(p) => (p.$hit ? "#cfaac9" : "#f3ecf3")};
  background: ${(p) => (p.$hit ? "#975a8e" : p.$fill)};
  color: #252423;
  font-size: 9.5px;
  line-height: 17px;
  text-align: right;
`;
const TotalRow = styled.div`
  height: 14px;
  padding-left: 5px;
  color: #252423;
  font-size: 10.3px;
  font-weight: 700;
  line-height: 17px;
`;
const ScrollColumn = styled.div`
  width: 7px;
  height: 205px;
  display: flex;
  flex-direction: column;
  justify-content: space-between;
  background: #f0f0f0;
`;
const VThumb = styled.div`
  height: 133px;
  margin: 6px 0 31px;
  background: #cdcdcd;
`;
const ScrollBarRow = styled.div`
  width: 837px;
  height: 7px;
  margin-top: 1px;
  display: flex;
  align-items: center;
  justify-content: space-between;
  padding: 0 7px;
  background: #f0f0f0;
`;
const HThumb = styled.div`
  width: 791px;
  height: 7px;
  margin-right: 6px;
  background: #cdcdcd;
`;
const Arrow = ({ d, top = 0 }: { d: string; top?: number }) => (
  <svg width="7" height={7 + top} viewBox={`0 ${-top} 7 ${7 + top}`} fill="none" stroke="#555" strokeWidth="1">
    <path d={d} />
  </svg>
);

const names = ["Captured_Perpetrators", "Day", "Latitude", "Longitude", "Month", "Perpetrator_Killed", "Perpetrator_Wounded", "Perpetrators", "Total_killed", "US_Killed", "US_Wounded"];
const heads = ["Captured_Per\npetrators", "Day", "Latitude", "Longitude", "Month", "Perpetrator\n_Killed", "Perpetrator_Wounded", "Perpetrators", "Total_killed", "US_Killed", "US_Wounded", "Wounded", "Year"];
const tints = ["#ead5e6", "#e3cbe0", "#e8d6e7", "#e6d3e4", "#e0cfdc", "#e3d0e0", "#e2d0e0", "#e6d4e3", "#e4d1e1", "#e6d9d9", "#e7d2e4", "#e5d4e3", "#e5d2e3"];

/* ---------- page tabs ---------- */

const TabStrip = styled.footer`
  height: 3px;
  display: flex;
  background: #f3f1f1;
`;
const TabPiece = styled.div<{ $width: number; $active?: boolean; $accent?: boolean }>`
  width: ${(p) => p.$width}px;
  border-right: 1px solid #c4c2c2;
  background: ${(p) => (p.$active ? "#fff" : "#f2f0f0")};
  border-bottom: ${(p) => (p.$accent ? "1px solid #e8c53a" : "0")};
`;

export default function App() {
  return (
    <Page>
      <GlobalStyle />
      <Workspace>
        <PageEdge />
        <Report>
          <Sidebar>
            <BackButton aria-label="Back">
              <svg width="24" height="24" viewBox="0 0 24 24" fill="none" stroke="#5f5f5c" strokeWidth="2">
                <circle cx="11.5" cy="11.5" r="10" />
                <path d="M18 11.5H6M11.8 5.7L6 11.5L11.8 17.3" />
              </svg>
            </BackButton>
            {slicers.map((s) => (
              <SlicerBlock key={s.title} $indent={s.indent} $width={s.width} $gap={s.gap}>
                <SlicerTitle>
                  {s.title}
                  <Chevron />
                </SlicerTitle>
                <SlicerSelect>
                  All
                  <Chevron w={11} />
                </SlicerSelect>
              </SlicerBlock>
            ))}
          </Sidebar>
          <Main>
            <Nav>
              <NavButton>Overview</NavButton>
              <NavButton>Locations</NavButton>
              <NavButton>Maps</NavButton>
            </Nav>
            <MapRow>
              <Panel $width={438} $tint="#dde7de">
                <PanelTitle $color="#1f1f1f" $track={0.4}>Distribution of Attacks</PanelTitle>
                <LegendRow $h={23}>
                  <LegendTitle $width={63}>Attack_Type</LegendTitle>
                  {attackLegend.map(([t, c, w]) => (
                    <LegendItem key={t} $width={w} $dot={c}>{t}</LegendItem>
                  ))}
                  <LegendNext $inset={1.5} />
                </LegendRow>
                <AttackMap />
              </Panel>
              <Panel $width={404} $tint="#d8e6dc">
                <PanelTitle $color="#333" $track={0}>Spread of Terrorism over Years</PanelTitle>
                <LegendRow $h={22}>
                  <LegendTitle $width={26}>Year</LegendTitle>
                  {yearColors.map((c, i) => (
                    <LegendItem key={c} $width={35.4} $dot={c}>{1970 + i}</LegendItem>
                  ))}
                  <LegendNext $inset={0} />
                </LegendRow>
                <SpreadMap />
              </Panel>
            </MapRow>
            <MatrixPanel>
              <MatrixBody>
                <MatrixMain>
                  <MatrixView>
                    <HeaderRow>
                      <HeaderCell>
                        Column
                        <SortMark />
                      </HeaderCell>
                      {heads.map((h) => (
                        <HeaderCell key={h}>{h}</HeaderCell>
                      ))}
                    </HeaderRow>
                    {names.map((n, r) => (
                      <BodyRow key={n}>
                        <RowLabel $band={r % 2 === 1}>{n}</RowLabel>
                        {tints.map((t, c) => {
                          const hit = r === c || (r === 9 && c === 11);
                          return (
                            <ValueCell key={c} $fill={t} $hit={hit}>{hit ? 1 : 0}</ValueCell>
                          );
                        })}
                      </BodyRow>
                    ))}
                  </MatrixView>
                  <TotalRow>Total</TotalRow>
                </MatrixMain>
                <ScrollColumn>
                  <Arrow d="M1 7L3.5 4.5L6 7" top={4} />
                  <VThumb />
                  <Arrow d="M1 -3L3.5 -0.5L6 -3" top={4} />
                </ScrollColumn>
              </MatrixBody>
              <ScrollBarRow>
                <Arrow d="M4.5 1L2 3.5L4.5 6" />
                <HThumb />
                <Arrow d="M1.5 1L4 3.5L1.5 6" />
              </ScrollBarRow>
            </MatrixPanel>
          </Main>
        </Report>
      </Workspace>
      <TabStrip>
        <TabPiece $width={27} />
        <TabPiece $width={91} />
        <TabPiece $width={71} $active />
        <TabPiece $width={76} />
        <TabPiece $width={39} $accent />
      </TabStrip>
    </Page>
  );
}
